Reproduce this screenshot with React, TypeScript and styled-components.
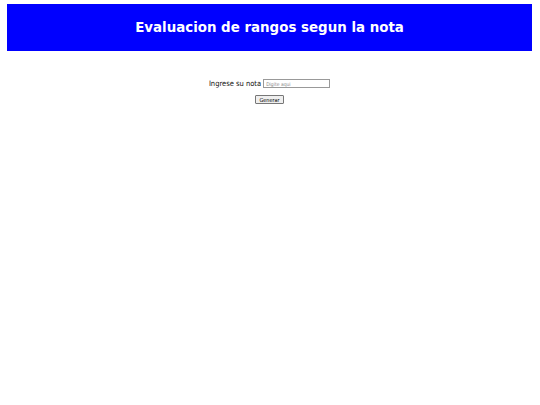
import styled, { createGlobalStyle } from "styled-components";

const GlobalStyle = createGlobalStyle`
  html, body {
    margin: 0;
    padding: 0;
    background: #ffffff;
  }
  body {
    font-family: "DejaVu Sans", Verdana, sans-serif;
  }
`;

const Page = styled.div`
  padding: 4px 8px 0 7px;
`;

const Header = styled.header`
  background-color: #0000ff;
  height: 47px;
  display: flex;
  align-items: center;
  justify-content: center;
`;

const Title = styled.h1`
  margin: 0;
  color: #ffffff;
  font-size: 13.4px;
  font-weight: bold;
`;

const Form = styled.form`
  display: flex;
  flex-direction: column;
  align-items: center;
  gap: 7px;
  margin-top: 28px;
`;

const Row = styled.div`
  display: flex;
  align-items: center;
  gap: 2px;
`;

const Label = styled.label`
  font-family: "DejaVu Sans Condensed", "DejaVu Sans", sans-serif;
  font-size: 7.5px;
  color: #111111;
`;

const Input = styled.input`
  width: 67px;
  height: 9px;
  box-sizing: border-box;
  border: 1px solid #999;
  padding: 0 2px;
  font-size: 5px;
  font-family: "DejaVu Sans Condensed", "DejaVu Sans", sans-serif;
  &::placeholder {
    color: #888;
  }
`;

const Button = styled.button`
  font-family: "DejaVu Sans Condensed", "DejaVu Sans", sans-serif;
  font-size: 5.5px;
  height: 9px;
  padding: 0 3px;
  border: 1px solid #777;
  border-radius: 1px;
  background: #efefef;
  color: #000;
`;

export default function App() {
  return (
    <>
      <GlobalStyle />
      <Page>
        <Header>
          <Title>Evaluacion de rangos segun la nota</Title>
        </Header>
        <Form onSubmit={(e) => e.preventDefault()}>
          <Row>
            <Label htmlFor="nota">Ingrese su nota</Label>
            <Input id="nota" type="text" placeholder="Digite aqui" />
          </Row>
          <Button type="submit">Generar</Button>
        </Form>
      </Page>
    </>
  );
}
